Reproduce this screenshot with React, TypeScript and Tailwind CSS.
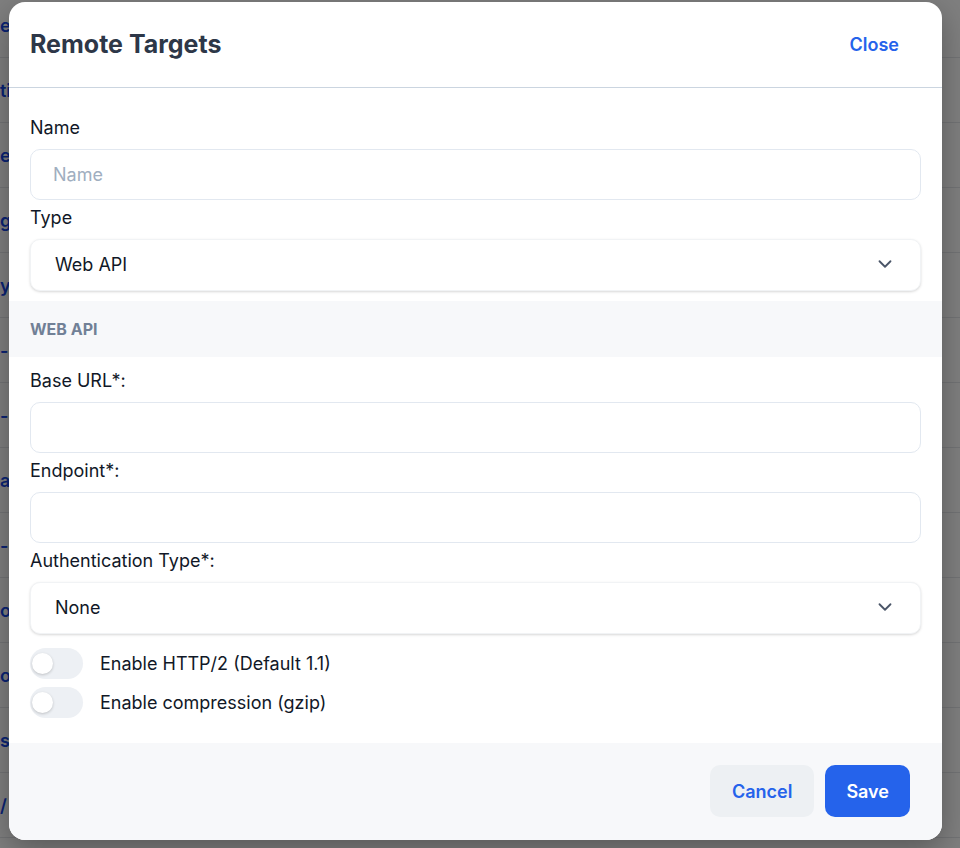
import { ChevronDown } from "lucide-react";

const rows = ["e", "ti", "e", "gl", "yl", "--", "-", "at", "-s", "og", "og", "sf", "/"];

function Field({ label, first }: { label: string; first?: boolean }) {
  return (
    <div className={first ? "" : "mt-[5px]"}>
      <label className="block h-[26px] leading-[26px] text-[18px] text-[#111827] mb-[8px]">{label}</label>
    </div>
  );
}

function TextInput({ placeholder }: { placeholder?: string }) {
  return (
    <input
      placeholder={placeholder}
      className="block w-full h-[51px] rounded-[10px] border border-[#e2e8f0] bg-white px-[22px] text-[18px] text-[#111827] placeholder:text-[#a0aec0] outline-none"
    />
  );
}

function SelectBox({ value }: { value: string }) {
  return (
    <div className="flex items-center justify-between h-[52px] rounded-[10px] bg-white pl-[24px] pr-[24px] shadow-[0_1px_3px_rgba(0,0,0,0.12),0_1px_2px_rgba(0,0,0,0.04)] border border-[#f1f3f5]">
      <span className="text-[18px] text-[#111827] -mt-[2px]">{value}</span>
      <ChevronDown size={22} strokeWidth={2} className="text-[#4a5568] -mt-[2px]" />
    </div>
  );
}

function Toggle({ label }: { label: string }) {
  return (
    <div className="flex items-center gap-[17px]">
      <div className="relative w-[53px] h-[31px] rounded-full bg-[#edf0f4]">
        <div className="absolute left-[2px] top-[5px] w-[21px] h-[21px] rounded-full bg-white shadow-[0_1px_3px_rgba(0,0,0,0.2)]" />
      </div>
      <span className="text-[18px] text-[#111827]">{label}</span>
    </div>
  );
}

export default function App() {
  return (
    <div className="relative w-[960px] h-[848px] overflow-hidden bg-white" style={{ fontFamily: "Inter, 'Liberation Sans', sans-serif" }}>
      {/* page behind the dialog */}
      <div className="-mt-[7px]">
        {rows.map((r, i) => (
          <div key={i} className="h-[65px] border-b border-gray-200 flex items-center text-[18px] font-semibold text-blue-700">
            {r}
          </div>
        ))}
      </div>

      <div className="absolute inset-0 bg-black/50" />

      <div className="absolute left-[9px] top-[2px] w-[933px] h-[838px] rounded-2xl bg-white overflow-hidden shadow-[0_10px_30px_rgba(0,0,0,0.3)] flex flex-col">
        <div className="h-[86px] shrink-0 flex items-center justify-between pl-[21px] pr-[43px] border-b border-[#cbd5e0]">
          <h1 className="text-[25px] font-bold text-[#2d3748]">Remote Targets</h1>
          <button className="text-[18px] font-semibold text-[#2563eb]">Close</button>
        </div>

        <div className="flex-1 pt-[27px]">
          <div className="px-[21px]">
            <Field label="Name" first />
            <TextInput placeholder="Name" />
            <Field label="Type" />
            <SelectBox value="Web API" />
          </div>

          <div className="mt-[10px] h-[56px] bg-[#f7f8fa] flex items-center px-[21px]">
            <span className="text-[16px] font-bold text-[#718096] uppercase">Web API</span>
          </div>

          <div className="px-[21px] pt-[6px]">
            <Field label="Base URL*:" />
            <TextInput />
            <Field label="Endpoint*:" />
            <TextInput />
            <Field label="Authentication Type*:" />
            <SelectBox value="None" />
            <div className="mt-[14px] flex flex-col gap-[8px]">
              <Toggle label="Enable HTTP/2 (Default 1.1)" />
              <Toggle label="Enable compression (gzip)" />
            </div>
          </div>
        </div>

        <div className="h-[97px] shrink-0 bg-[#f7f8fa] flex items-center justify-end gap-[11px] pr-[32px] pb-[1px]">
          <button className="h-[52px] px-[22px] rounded-[10px] bg-[#edf0f3] text-[18px] font-semibold text-[#2563eb]">Cancel</button>
          <button className="h-[52px] px-[21px] rounded-[10px] bg-[#2563eb] text-[18px] font-semibold text-white">Save</button>
        </div>
      </div>
    </div>
  );
}
